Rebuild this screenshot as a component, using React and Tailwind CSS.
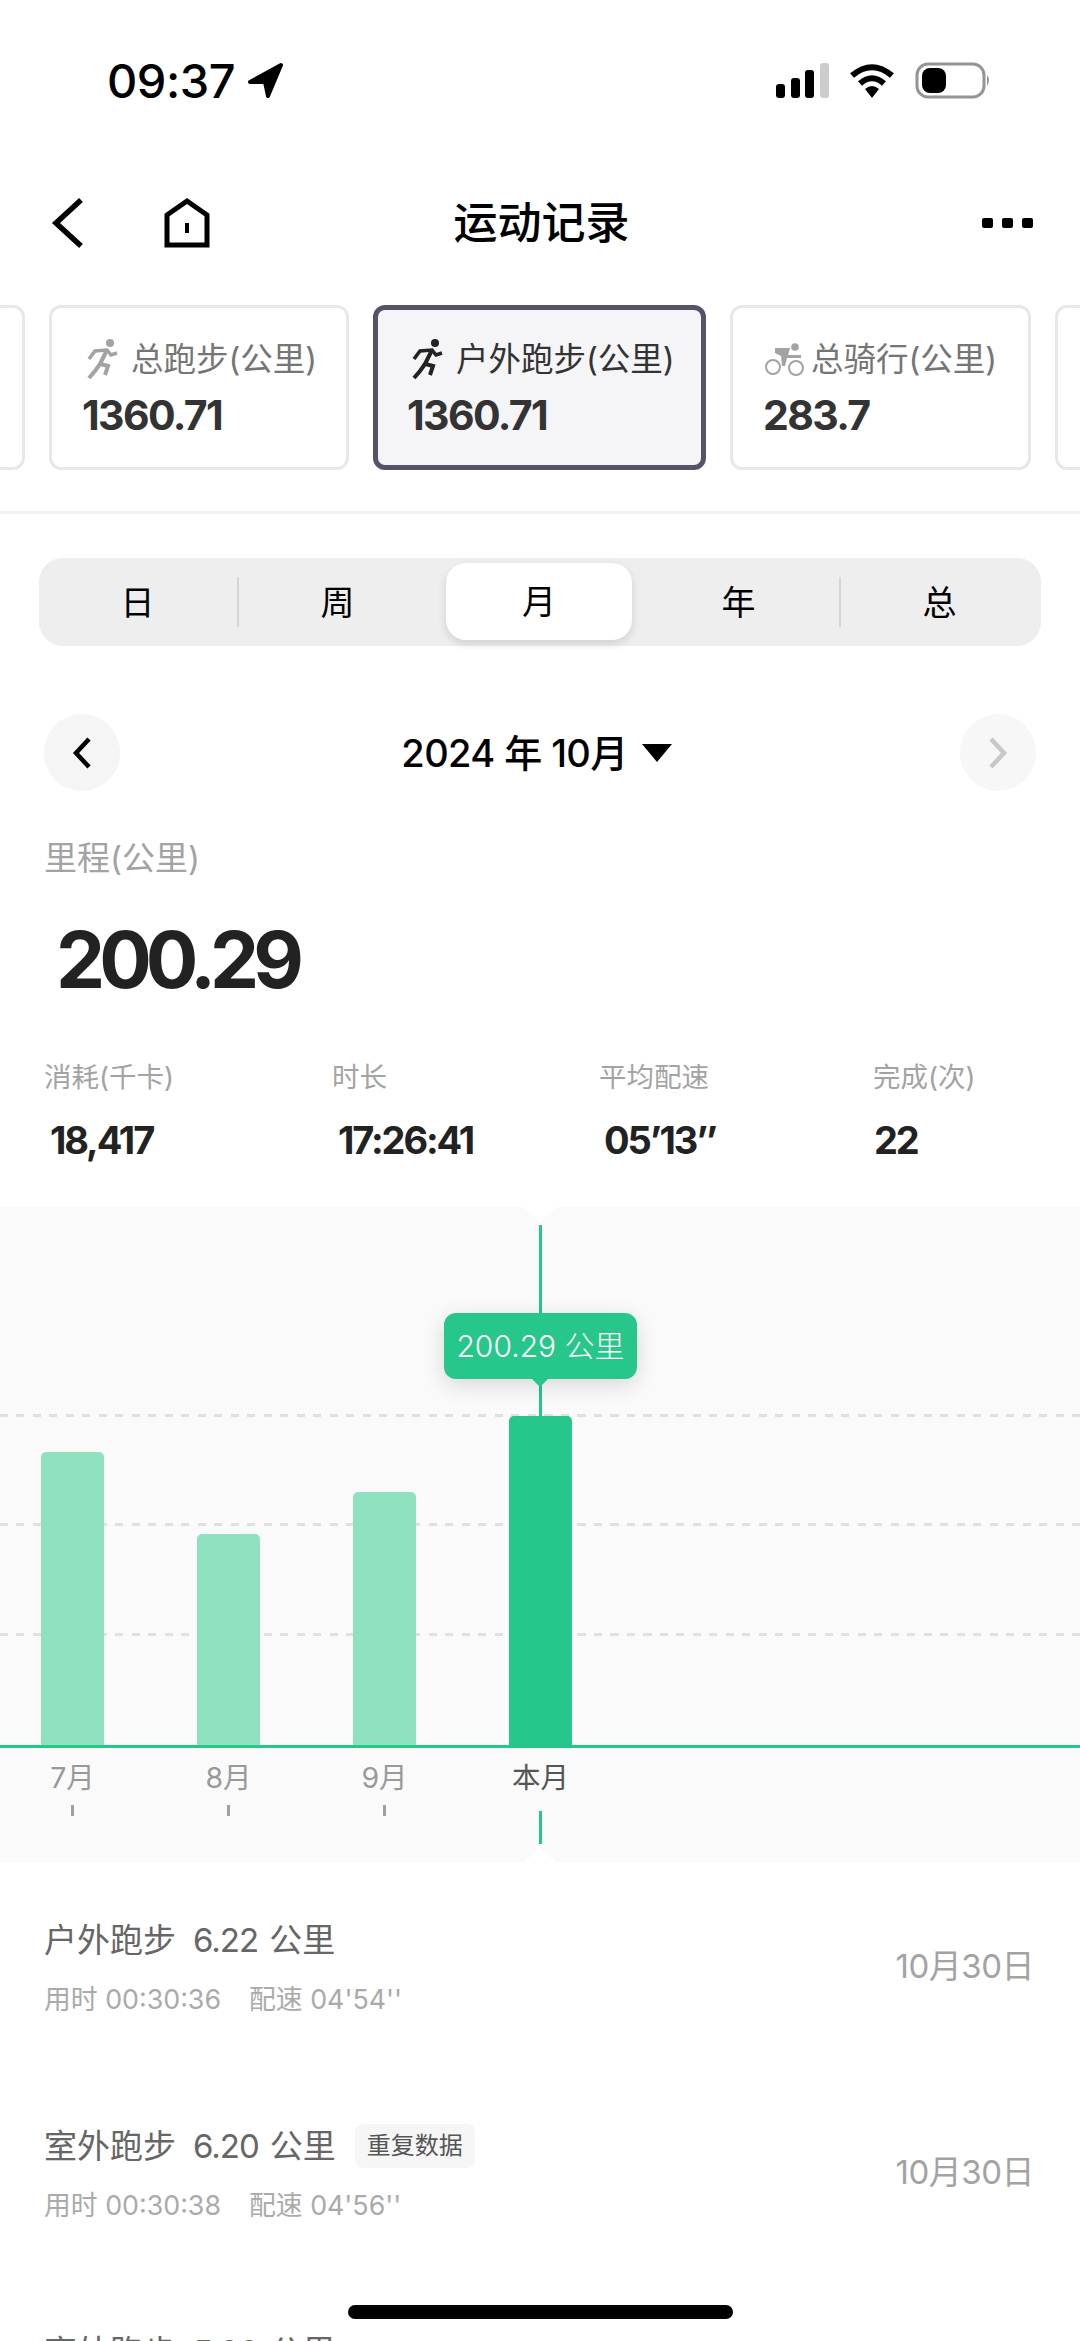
const cards = [
  { label: '', value: '', width: 'w-[300px] -ml-[275px]' },
  { label: '总跑步(公里)', value: '1360.71', width: 'w-[300px]', icon: 'run' },
  { label: '户外跑步(公里)', value: '1360.71', width: 'w-[333px]', icon: 'run', active: true },
  { label: '总骑行(公里)', value: '283.7', width: 'w-[301px]', icon: 'bike' },
  { label: '', value: '', width: 'w-[300px]' }
];

const stats = [
  { label: '消耗(千卡)', value: '18,417', width: 'w-[288px]', indent: 'pl-[6px]' },
  { label: '时长', value: '17:26:41', width: 'w-[267px]', indent: 'pl-[6px]' },
  { label: '平均配速', value: '05’13’’', width: 'w-[274px]', indent: 'pl-[5px]' },
  { label: '完成(次)', value: '22', width: 'w-[160px]', indent: 'pl-[1px]' }
];

const bars = [
  { label: '7月', height: 'h-[293px]' },
  { label: '8月', height: 'h-[211px]' },
  { label: '9月', height: 'h-[253px]' },
  { label: '本月', height: 'h-[329px]', current: true }
];

const records = [
  { title: '户外跑步', km: '6.22', time: '00:30:36', pace: "04'54''" },
  { title: '室外跑步', km: '6.20', time: '00:30:38', pace: "04'56''", tag: '重复数据' },
  { title: '室外跑步', km: '5.00', time: '00:30:00', pace: "04'56''" }
];

function StatusIcons() {
  return (
    <svg width="222" height="40" viewBox="0 0 222 40">
      <rect x="7" y="24" width="9" height="14" rx="3" fill="#000" />
      <rect x="22" y="18" width="9" height="20" rx="3" fill="#000" />
      <rect x="36" y="10" width="9" height="28" rx="3" fill="#000" />
      <rect x="51" y="3" width="9" height="35" rx="3" fill="#ccc" />
      <path d="M83 15.5 Q103 -1 123 15.5" fill="none" stroke="#000" strokeWidth="6" />
      <path d="M91 23.5 Q103 13 115 23.5" fill="none" stroke="#000" strokeWidth="6" />
      <path d="M96 29 Q103 23 110 29 L103 38 Z" fill="#000" />
      <rect x="148" y="4" width="67" height="33" rx="11" fill="none" stroke="#949494" strokeWidth="3" />
      <rect x="153" y="8" width="24" height="25" rx="8" fill="#000" />
      <path d="M218 15 Q222 20 218 26 Z" fill="#949494" />
    </svg>
  );
}

function RunIcon({ color }) {
  return (
    <svg width="50" height="50" viewBox="0 0 50 50" fill="none" stroke={color} strokeWidth="3.6" className="shrink-0 -ml-[2px]">
      <circle cx="30" cy="8" r="4" fill={color} stroke="none" />
      <path d="M9 24 L15 16 L27 15 L31 20 L37 18" />
      <path d="M27 15 L20 29 L28 31 L25 40" strokeWidth="4" />
      <path d="M20 29 L15 36 L9 43" strokeWidth="4" />
    </svg>
  );
}

function BikeIcon({ color }) {
  return (
    <svg width="50" height="50" viewBox="0 0 50 50" className="shrink-0 -ml-[3px]">
      <circle cx="35" cy="12" r="3.8" fill={color} />
      <circle cx="13" cy="32" r="7" fill="none" stroke={color} strokeWidth="2" />
      <circle cx="36" cy="33" r="7" fill="none" stroke={color} strokeWidth="2" />
      <path d="M15 13 H30 L28 20 H41 V23 H27 L25 31 H22 L21 21 L15 18 Z" fill={color} />
    </svg>
  );
}

export default function App() {
  return (
    <div className="relative w-[1080px] h-[2341px] overflow-hidden bg-white font-[family-name:Inter,'Noto_Sans_CJK_SC',sans-serif]">
      {/* status bar */}
      <div className="h-[160px] flex items-center justify-between pl-[107px] pr-[89px]">
        <div className="flex items-center gap-[12px]">
          <span className="text-[47px] leading-none font-medium text-black tracking-[-0.5px]">09:37</span>
          <svg width="37" height="37" viewBox="0 0 37 37">
            <path d="M34 3 L3 20 L18 20 L21 34 Z" fill="#000" stroke="#000" strokeWidth="4" strokeLinejoin="round" />
          </svg>
        </div>
        <StatusIcons />
      </div>

      {/* nav */}
      <div className="h-[126px] grid grid-cols-[1fr_auto_1fr] items-center pl-[50px] pr-[47px]">
        <div className="flex items-center gap-[77px]">
          <svg width="36" height="52" viewBox="0 0 36 52" fill="none" stroke="#000" strokeWidth="5.5">
            <path d="M31 3 L6 26 L31 49" />
          </svg>
          <svg width="48" height="52" viewBox="0 0 48 52" fill="none" stroke="#000" strokeWidth="5">
            <path d="M4 18 L24 4 L44 18 L44 48 L4 48 Z" />
            <path d="M24 26 L24 36" strokeWidth="4" />
          </svg>
        </div>
        <h1 className="text-[44px] leading-none font-medium text-black">运动记录</h1>
        <div className="flex justify-end gap-[9px]">
          <span className="w-[11px] h-[10px] rounded-[2px] bg-black" />
          <span className="w-[11px] h-[10px] rounded-[2px] bg-black" />
          <span className="w-[11px] h-[10px] rounded-[2px] bg-black" />
        </div>
      </div>

      {/* metric cards */}
      <div className="pt-[19px] pb-[41px] border-b-[3px] border-[#f2f2f2] flex gap-[24px] overflow-hidden">
        {cards.map((card, i) => (
          <div
            key={i}
            className={`${card.width} h-[165px] shrink-0 rounded-[12px] ${
              card.active
                ? 'border-[5px] border-[#57526a] bg-[#f5f5f8] pl-[29px] pt-[25px]'
                : 'border-[3px] border-[#e8e8e8] bg-white pl-[30px] pt-[27px]'
            }`}
          >
            {card.label && (
              <>
                <div className="flex items-center gap-[1px] h-[50px]">
                  {card.icon === 'bike' ? (
                    <BikeIcon color="#a3a3a3" />
                  ) : (
                    <RunIcon color={card.active ? '#222222' : '#a3a3a3'} />
                  )}
                  <span className={`text-[32.5px] leading-none whitespace-nowrap ${card.active ? 'text-[#333333]' : 'text-[#757575]'}`}>
                    {card.label}
                  </span>
                </div>
                <div className="mt-[5px] text-[41px] leading-[50px] font-bold text-[#333333] tracking-[-1.6px]">{card.value}</div>
              </>
            )}
          </div>
        ))}
      </div>

      {/* period tabs */}
      <div className="relative mt-[44px] mx-[39px] h-[88px] rounded-[24px] bg-[#eeeeee] flex items-center text-[34px] text-black">
        <div className="w-[197px] text-center">日</div>
        <div className="w-[1px]" />
        <div className="w-[201px] text-center">周</div>
        <div className="w-[200px] text-center">月</div>
        <div className="w-[201px] text-center">年</div>
        <div className="w-[201px] text-center">总</div>
        <div className="absolute left-[198px] top-[19px] w-[2px] h-[50px] bg-[#d6d6d6]" />
        <div className="absolute left-[800px] top-[19px] w-[2px] h-[50px] bg-[#d6d6d6]" />
        <div className="absolute left-[407px] top-[5px] w-[186px] h-[77px] rounded-[20px] bg-white shadow-[0_4px_10px_rgba(0,0,0,0.12)] flex items-center justify-center">
          月
        </div>
      </div>

      {/* month picker */}
      <div className="mt-[68px] mx-[44px] h-[77px] flex items-center justify-between">
        <div className="w-[76px] h-[77px] rounded-full bg-[#f5f5f5] flex items-center justify-center">
          <svg width="24" height="36" viewBox="0 0 24 36" fill="none" stroke="#000" strokeWidth="4.5">
            <path d="M19 4 L6 18 L19 32" />
          </svg>
        </div>
        <div className="flex items-center gap-[14px] -ml-[7px]">
          <span className="text-[38px] leading-none font-medium text-black tracking-[-0.6px]">2024 年 10月</span>
          <span className="w-0 h-0 border-x-[15px] border-x-transparent border-t-[18px] border-t-black" />
        </div>
        <div className="w-[76px] h-[77px] rounded-full bg-[#f7f7f7] flex items-center justify-center">
          <svg width="24" height="36" viewBox="0 0 24 36" fill="none" stroke="#c8c8c8" strokeWidth="4.5">
            <path d="M5 4 L18 18 L5 32" />
          </svg>
        </div>
      </div>

      {/* distance */}
      <div className="mt-[47px] pl-[44px] text-[33px] leading-[40px] text-[#a3a3a3]">里程(公里)</div>
      <div className="mt-[32px] pl-[56px] h-[100px] text-[78px] leading-[100px] font-bold text-[#222222] tracking-[-6px]">200.29</div>

      {/* stats */}
      <div className="mt-[49px] pl-[44px] flex">
        {stats.map(stat => (
          <div key={stat.label} className={stat.width}>
            <div className="text-[27.5px] leading-[36px] text-[#a3a3a3]">{stat.label}</div>
            <div className={`mt-[20px] ${stat.indent} text-[38px] leading-[50px] font-bold text-[#222222] tracking-[-2.1px] whitespace-nowrap`}>
              {stat.value}
            </div>
          </div>
        ))}
      </div>

      {/* chart */}
      <div className="relative mt-[42px] h-[655px] bg-[#fafafa] overflow-hidden">
        <div className="h-[538px] pl-[41px] flex items-end gap-[93px]">
          {bars.map(bar => (
            <div
              key={bar.label}
              className={`relative z-10 w-[63px] ${bar.height} rounded-t-[5px] ${bar.current ? 'bg-[#27c68a]' : 'bg-[#8fe2bf]'}`}
            />
          ))}
        </div>
        <div className="relative z-10 h-[3px] bg-[#27c68a]" />
        <div className="mt-[12px] pl-[41px] flex gap-[93px]">
          {bars.map(bar => (
            <div key={bar.label} className="w-[63px] flex flex-col items-center">
              <span className={`text-[28.5px] leading-[36px] whitespace-nowrap ${bar.current ? 'text-[#555555]' : 'text-[#999999]'}`}>{bar.label}</span>
              {!bar.current && <span className="mt-[9px] w-[3px] h-[11px] bg-[#a0a0a0]" />}
            </div>
          ))}
        </div>

        {/* grid lines */}
        <div className="absolute left-0 right-0 top-[207px] h-[3px] bg-[repeating-linear-gradient(90deg,#e0e0e0_0_8px,transparent_8px_16.5px)]" />
        <div className="absolute left-0 right-0 top-[316px] h-[3px] bg-[repeating-linear-gradient(90deg,#e0e0e0_0_8px,transparent_8px_16.5px)]" />
        <div className="absolute left-0 right-0 top-[426px] h-[3px] bg-[repeating-linear-gradient(90deg,#e0e0e0_0_8px,transparent_8px_16.5px)]" />

        {/* selection marker */}
        <div className="absolute left-[539px] top-[18px] w-[3px] h-[192px] bg-[#27c68a]" />
        <div className="absolute left-[539px] top-[604px] w-[3px] h-[33px] bg-[#27c68a]" />
        <div className="absolute left-[523px] top-0 w-0 h-0 border-x-[17px] border-x-transparent border-t-[15px] border-t-white" />
        <div className="absolute left-[525px] bottom-0 w-0 h-0 border-x-[15px] border-x-transparent border-b-[16px] border-b-white" />
        <div className="absolute left-[444px] top-[106px] w-[193px] h-[66px] rounded-[12px] bg-[#27c68a] shadow-[0_6px_22px_rgba(0,0,0,0.14)] flex items-center justify-center text-[30px] leading-none font-light text-white whitespace-nowrap">
          200.29 公里
        </div>
        <div className="absolute left-[532px] top-[172px] w-0 h-0 border-x-[8px] border-x-transparent border-t-[8px] border-t-[#27c68a]" />
      </div>

      {/* records */}
      <div className="pt-[56px] pl-[44px] pr-[46px]">
        {records.map((record, i) => (
          <div key={i} className="h-[206px] flex justify-between">
            <div>
              <div className="flex items-center h-[44px] text-[33px] leading-none text-[#666666] whitespace-nowrap">
                <span>{record.title}</span>
                <span className="ml-[17px] tracking-[-1px]">{record.km}</span>
                <span className="ml-[11px]">公里</span>
                {record.tag && (
                  <span className="ml-[19px] h-[44px] px-[12px] rounded-[8px] bg-[#f6f6f6] flex items-center text-[24px] text-[#555555]">
                    {record.tag}
                  </span>
                )}
              </div>
              <div className="mt-[19px] flex text-[26.8px] leading-[36px] text-[#aaaaaa] whitespace-nowrap">
                <span>用时 {record.time}</span>
                <span className="ml-[28px]">配速 {record.pace}</span>
              </div>
            </div>
            <div className="pt-[28px] text-[33px] leading-[40px] text-[#a3a3a3] whitespace-nowrap tracking-[-0.5px]">10月30日</div>
          </div>
        ))}
      </div>

      {/* home indicator */}
      <div className="absolute left-[348px] top-[2305px] w-[385px] h-[14px] rounded-full bg-black" />
    </div>
  );
}
